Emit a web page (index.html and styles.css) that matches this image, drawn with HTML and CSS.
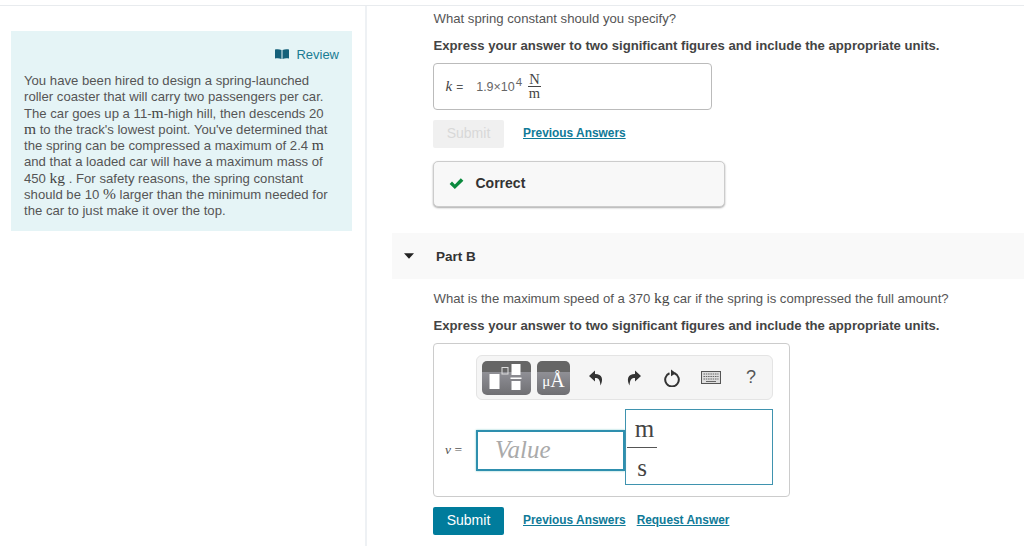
FILE: index.html
```html
<!DOCTYPE html>
<html lang="en">
<head>
<meta charset="utf-8">
<title>Part B</title>
<link rel="stylesheet" href="styles.css">
</head>
<body>
<div class="page">
  <aside class="side">
    <div class="intro">
      <div class="review">
        <svg class="book" width="14" height="10" viewBox="0 0 14 10"><path d="M0 .5C2 0 4.500 0 6.500 1v9C4.500 9 2 9 0 9.500zM14 .5C12 0 9.500 0 7.500 1v9C9.500 9 12 9 14 9.500z"/></svg>
        <span>Review</span>
      </div>
      <p class="story">You have been hired to design a spring-launched roller coaster that will carry two passengers per car. The car goes up a 11-<span class="m">m</span>-high hill, then descends 20 <span class="m">m</span> to the track's lowest point. You've determined that the spring can be compressed a maximum of 2.4 <span class="m">m</span> and that a loaded car will have a maximum mass of 450 <span class="m">kg</span> . For safety reasons, the spring constant should be 10 <span class="m">%</span> larger than the minimum needed for the car to just make it over the top.</p>
    </div>
  </aside>
  <main class="main">
    <section class="part-a">
      <p class="q">What spring constant should you specify?</p>
      <p class="ins">Express your answer to two significant figures and include the appropriate units.</p>
      <div class="ans-box">
        <i class="var">k</i><span class="eq">=</span>
        <span class="val">1.9×10<sup>4</sup></span>
        <span class="frac small"><span class="num">N</span><span class="den">m</span></span>
      </div>
      <div class="actions">
        <button class="btn disabled" type="button">Submit</button>
        <a class="link" href="#">Previous Answers</a>
      </div>
      <div class="correct">
        <svg width="15" height="11" viewBox="0 0 16 12"><path d="M.5 6.500l2.600-2.600 3.100 3.100L12.700.3 15.500 3 6.200 11.900z" fill="#0b8a3e"/></svg>
        <span>Correct</span>
      </div>
    </section>
    <header class="part-head">
      <svg width="10" height="6" viewBox="0 0 11 6"><path d="M0 0h11L5.500 6z" fill="#222"/></svg>
      <span>Part B</span>
    </header>
    <section class="part-b">
      <p class="q">What is the maximum speed of a 370 <span class="m">kg</span> car if the spring is compressed the full amount?</p>
      <p class="ins">Express your answer to two significant figures and include the appropriate units.</p>
      <div class="editor">
        <div class="toolbar">
          <span class="tool tool-wide">
            <svg width="46" height="30" viewBox="0 0 46 30">
              <rect x="5.500" y="11" width="10" height="15" fill="#fff"/>
              <rect x="18" y="4.500" width="6" height="6.500" fill="none" stroke="#ddd"/>
              <rect x="27.500" y="1" width="9" height="11" fill="#fff"/>
              <rect x="26.500" y="14.500" width="11" height="1.500" fill="#fff"/>
              <rect x="27.500" y="18" width="9" height="9" fill="#fff"/>
            </svg>
          </span>
          <span class="tool tool-unit"><span class="mu">μ</span><span class="ang">Å</span></span>
          <svg class="ico" width="16" height="16" viewBox="0 0 16 16"><path d="M7 0.500 1 6l6 5.500V8c3.500 0 5 1.500 5.500 7.500C15.500 9.500 14.500 4 7 4z" fill="#333"/></svg>
          <svg class="ico" width="16" height="16" viewBox="0 0 16 16"><path d="M9 0.500 15 6l-6 5.500V8c-3.500 0-5 1.500-5.500 7.500C.5 9.500 1.500 4 9 4z" fill="#333"/></svg>
          <svg class="ico" width="18" height="18" viewBox="0 0 18 18"><path d="M11.500 4.300a6.800 6.800 0 1 1-5 0" fill="none" stroke="#333" stroke-width="2"/><path d="M8 .5l5 3.800-5 3z" fill="#333"/></svg>
          <svg class="ico" width="20" height="13" viewBox="0 0 20 13"><rect x=".5" y=".5" width="19" height="12" fill="#ddd" stroke="#555"/><path d="M2.500 3h15M2.500 5.500h15M2.500 8h15" stroke="#666" stroke-dasharray="1.500 .8"/><path d="M5 10.500h10" stroke="#666"/></svg>
          <span class="help">?</span>
        </div>
        <div class="entry">
          <span class="v-label"><i>v</i> =</span>
          <div class="value">Value</div>
          <div class="units">
            <span class="frac big"><span class="num">m</span><span class="den">s</span></span>
          </div>
        </div>
      </div>
      <div class="actions final">
        <button class="btn" type="button">Submit</button>
        <a class="link" href="#">Previous Answers</a>
        <a class="link" href="#">Request Answer</a>
      </div>
    </section>
  </main>
</div>
</body>
</html>
```
FILE: styles.css
```css
* { box-sizing: border-box; }
html, body { margin: 0; padding: 0; }
body {
  width: 1024px;
  height: 546px;
  overflow: hidden;
  background: #fff;
  color: #555;
  font-family: "Liberation Sans", Arial, sans-serif;
  font-size: 13.15px;
}
p { margin: 0; }
.page {
  display: flex;
  height: 541px;
  margin-top: 5px;
  border-top: 1px solid #e8ebee;
}
.side {
  width: 367px;
  flex: none;
  padding: 25px 13px 0 11px;
  border-right: 2px solid #eef1f4;
}
.intro {
  height: 200px;
  padding: 15px 13px 0;
  background: #e5f4f6;
}
.review {
  display: flex;
  justify-content: flex-end;
  align-items: center;
  gap: 7px;
  height: 16px;
  color: #1b7c94;
  font-size: 13px;
}
.book { fill: #14607a; }
.story {
  margin-top: 11px;
  line-height: 16.3px;
  color: #555;
}
.m {
  font-family: "Liberation Serif", serif;
  font-size: 15.5px;
  line-height: 0;
  color: #444;
}
.main {
  flex: 1;
  min-width: 0;
  padding-left: 25px;
}
.part-a, .part-b { padding-left: 41px; }
.q { padding-left: .5px; line-height: 16px; }
.part-a .q { margin-top: 5px; }
.ins {
  margin-top: 11px;
  padding-left: .5px;
  font-weight: 700;
  color: #444;
  line-height: 16px;
}
.ans-box {
  display: flex;
  align-items: center;
  width: 279px;
  height: 47px;
  margin-top: 9px;
  padding-left: 11.5px;
  border: 1px solid #bbb;
  border-radius: 4px;
  font-size: 12px;
}
.var { font-family: "Liberation Serif", serif; font-size: 15px; color: #444; }
.eq { margin: 0 13px 0 4px; }
.val { color: #666; font-size: 12.5px; }
sup { font-size: 11.5px; line-height: 0; vertical-align: 5px; margin-left: 1px; }
.frac {
  display: inline-flex;
  flex-direction: column;
  align-items: center;
  font-family: "Liberation Serif", serif;
}
.frac.small { margin-left: 6px; font-size: 14.5px; line-height: 11px; color: #444; }
.frac.small .num { width: 100%; padding: 0 1px 1px; border-bottom: 1px solid #444; text-align: center; }
.frac.small .den { padding-top: 1px; }
.actions {
  display: flex;
  align-items: center;
  height: 28px;
  margin-top: 10px;
}
.btn {
  width: 71px;
  height: 28px;
  padding: 0 0 2px;
  border: 0;
  border-radius: 2px;
  background: #007c9c;
  color: #fff;
  font: 14px "Liberation Sans", Arial, sans-serif;
}
.btn.disabled { background: #f0f0f0; color: #d8d8d8; }
.link {
  margin-left: 19px;
  margin-bottom: 2px;
  color: #0f7a98;
  font-size: 11.9px;
  font-weight: 700;
}
.link + .link { margin-left: 11px; }
.correct {
  display: flex;
  align-items: center;
  gap: 12px;
  width: 292px;
  height: 46px;
  margin-top: 13px;
  padding: 0 0 2px 14.500px;
  background: #f8f8f8;
  border: 1px solid #ccc;
  border-radius: 5px;
  box-shadow: 0 1px 2px #aaa;
  color: #333;
  font-size: 14px;
  font-weight: 700;
}
.part-head {
  display: flex;
  align-items: center;
  gap: 22px;
  height: 46px;
  margin-top: 26px;
  padding-left: 12px;
  background: #f9f9f9;
  color: #333;
  font-size: 13.5px;
  font-weight: 700;
}
.part-b .q { margin-top: 12px; }
.part-b .ins { margin-top: 11px; }
.editor {
  width: 357px;
  height: 154px;
  margin-top: 9px;
  border: 1px solid #ccc;
  border-radius: 4px;
}
.toolbar {
  display: flex;
  align-items: center;
  width: 297px;
  height: 45px;
  margin: 11px 0 0 42px;
  padding: 0 5px;
  background: #f5f5f5;
  border: 1px solid #e4e4e4;
  border-radius: 6px;
}
.tool {
  display: flex;
  align-items: center;
  justify-content: center;
  height: 34px;
  border-radius: 5px;
  background: linear-gradient(#666 0 32%, #909096 32%, #6f6f73);
  color: #fff;
}
.tool-wide { width: 49px; }
.tool-unit {
  align-items: flex-end;
  width: 33px;
  margin-left: 6px;
  padding-bottom: 6px;
  font-family: "Liberation Serif", serif;
}
.mu { font-size: 15px; line-height: 16px; }
.ang { font-size: 20px; line-height: 18px; }
.ico { flex: none; }
.ico:nth-of-type(1) { margin-left: 18px; }
.ico:nth-of-type(2) { margin-left: 22px; }
.ico:nth-of-type(3) { margin-left: 21px; }
.ico:nth-of-type(4) { margin-left: 20px; }
.help { margin-left: 25px; font-size: 18px; color: #555; }
.entry {
  display: flex;
  align-items: flex-start;
  height: 76px;
  margin-top: 9px;
  padding-left: 11px;
}
.v-label {
  width: 31px;
  margin-top: 33px;
  font-family: "Liberation Serif", serif;
  font-size: 13.5px;
  color: #555;
}
.value {
  width: 149px;
  height: 41px;
  margin-top: 21px;
  padding-left: 17px;
  border: 2px solid #2e8fae;
  box-shadow: 0 0 2px #8cc;
  font: italic 25px/36px "Liberation Serif", serif;
  color: #aaa;
}
.units {
  width: 148px;
  height: 76px;
  border: 1px solid #3f93af;
}
.frac.big {
  width: 30px;
  margin-left: 1px;
  font-size: 25px;
  color: #444;
}
.frac.big .num { width: 100%; height: 38px; padding-left: 5px; line-height: 38px; border-bottom: 1px solid #555; text-align: center; }
.frac.big .den { height: 38px; line-height: 40px; }
.final { margin-top: 10px; }
```
